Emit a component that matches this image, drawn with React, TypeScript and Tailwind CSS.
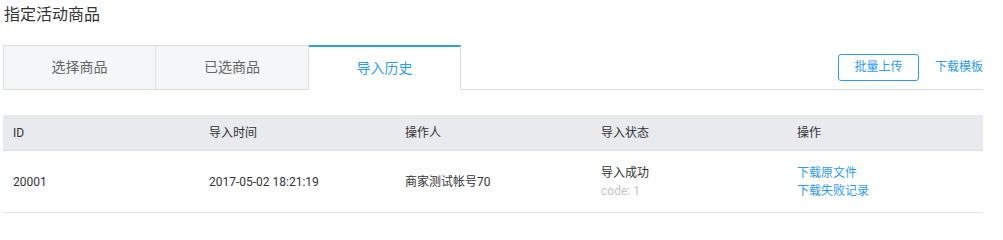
const tabs = ["选择商品", "已选商品", "导入历史"];
const active = 2;

const cols = ["ID", "导入时间", "操作人", "导入状态", "操作"];

export default function App() {
  return (
    <div className="min-h-[226px] bg-white px-[3px] font-['Roboto','Noto_Sans_CJK_SC',sans-serif] text-[#333]">
      <div className="h-[30px] pl-[1px] text-[16px] leading-[30px] text-[#333]">
        指定活动商品
      </div>

      <div className="mt-[15px] flex h-[45px] w-[980px] items-stretch border-b border-[#dcdee2]">
        {tabs.map((t, i) => (
          <div
            key={t}
            className={
              i === active
                ? "-mb-px flex w-[152px] items-center justify-center border-r border-t-2 border-[#dcdee2] border-t-[#2d9bf0] bg-white text-[14px] text-[#2d9bf0]"
                : "flex w-[153px] items-center justify-center border-t border-r border-[#dcdee2] bg-[#f5f6f8] text-[14px] text-[#666] first:border-l"
            }
          >
            {t}
          </div>
        ))}
        <div className="ml-auto flex items-center gap-4">
          <button className="h-[27px] w-[81px] rounded-[3px] border border-[#2d9bf0] text-[12px] text-[#2d9bf0]">
            批量上传
          </button>
          <a className="text-[12px] text-[#2d9bf0]">下载模板</a>
        </div>
      </div>

      <div className="mt-[25px] w-[980px] text-[12px]">
        <div className="grid h-[36px] grid-cols-5 items-center border-b border-[#dcdee2] bg-[#e9eaee] text-[#333]">
          {cols.map((c) => (
            <div key={c} className="pl-[10px]">
              {c}
            </div>
          ))}
        </div>
        <div className="grid h-[62px] grid-cols-5 items-center border-b border-[#e3e4e8] leading-[18px] [&>div]:pl-[10px]">
          <div>20001</div>
          <div>2017-05-02 18:21:19</div>
          <div>商家测试帐号70</div>
          <div>
            <div>导入成功</div>
            <div className="text-[#c4c4c4]">code: 1</div>
          </div>
          <div className="text-[#2d9bf0]">
            <div>下载原文件</div>
            <div>下载失败记录</div>
          </div>
        </div>
      </div>
    </div>
  );
}
